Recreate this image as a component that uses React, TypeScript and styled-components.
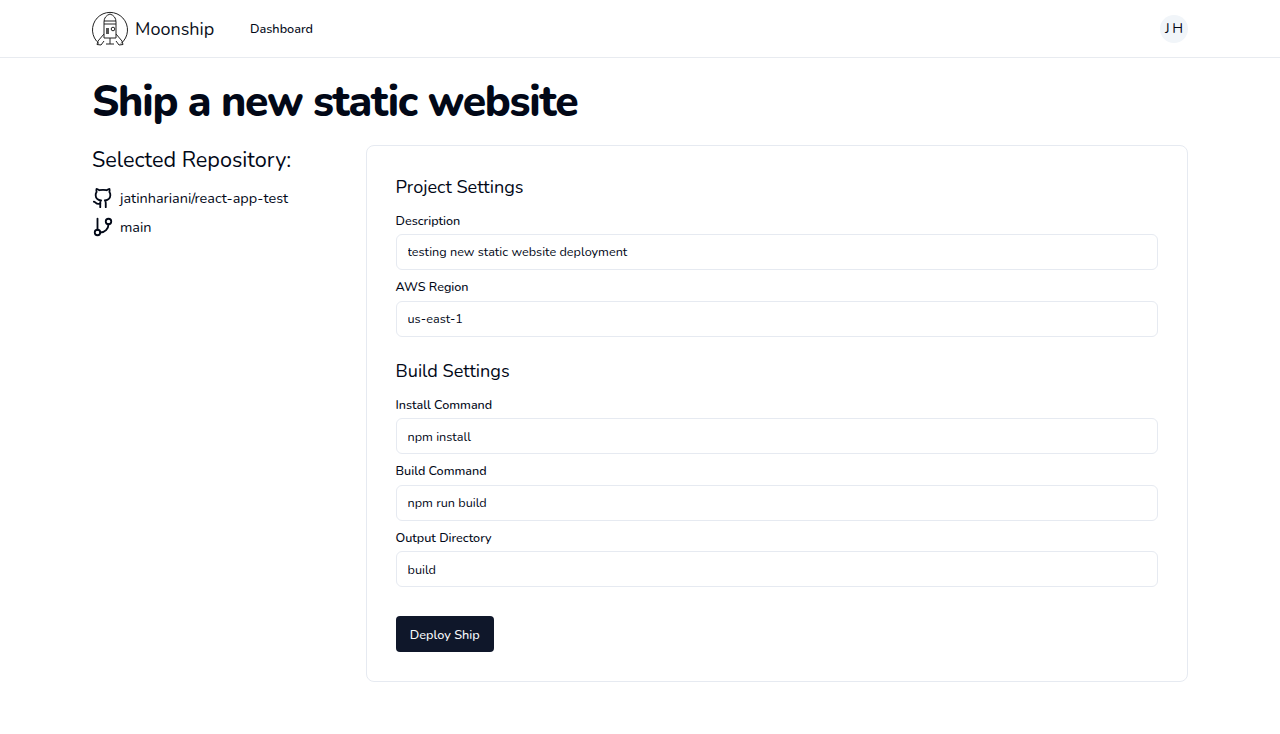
import React from "react";
import styled, { createGlobalStyle } from "styled-components";
import { Github, GitBranch } from "lucide-react";

const Global = createGlobalStyle`
  * { box-sizing: border-box; }
  html, body { margin: 0; padding: 0; background: #fff; }
  body { font-family: "Nunito", "Lato", "Noto Sans", sans-serif; color: #020817; }
`;
const Header = styled.header`
  height: 58px;
  border-bottom: 1px solid #e8ebf0;
  padding: 0 92px;
  display: flex;
  align-items: center;
  justify-content: space-between;
`;
const Left = styled.div`display: flex; align-items: center;`;
const Brand = styled.div`
  display: flex; align-items: center; gap: 7px;
  font-size: 18px; width: 158px; color: #0b1020;
`;
const NavLink = styled.a`font-size: 12.7px; font-weight: 500; color: #020817;`;
const Avatar = styled.div`
  width: 28px; height: 28px; border-radius: 50%;
  background: #f1f5f9; display: flex; align-items: center; justify-content: center;
  font-size: 14.2px; word-spacing: -1px;
`;
const Main = styled.main`padding: 0 92px;`;
const Title = styled.h1`
  margin: 0; padding-top: 20px; height: 87px;
  font-size: 42.67px; line-height: 48px; font-weight: 800; letter-spacing: -1.25px; color: #020817;
`;
const Columns = styled.div`display: flex; align-items: flex-start;`;
const Side = styled.aside`width: 274px; flex: none;`;
const SideTitle = styled.h2`
  margin: 0 0 8.5px; font-size: 21.6px; line-height: 30px; font-weight: 400;
`;
const RepoRow = styled.div`
  display: flex; align-items: center; gap: 6px; height: 29px;
  font-size: 14.45px;
`;
const Card = styled.section`
  flex: 1; height: 537px; border: 1px solid #e6eaf1; border-radius: 8px;
  padding: 28.5px 29.5px 28.5px 28.5px;
`;
const SectionTitle = styled.h3<{ $top?: number; $bottom: number }>`
  margin: ${p => p.$top ?? 0}px 0 ${p => p.$bottom}px; font-size: 18.1px; line-height: 24px; font-weight: 400;
`;
const Field = styled.label`display: block; margin-bottom: 8.1px;`;
const Label = styled.span`
  display: block; font-size: 12.6px; line-height: 17.8px; font-weight: 500; margin-bottom: 4.7px;
`;
const Input = styled.input`
  display: block; width: 100%; height: 36px; border: 1px solid #e6eaf1; border-radius: 6px;
  padding: 0 11px; font: inherit; font-size: 12.67px; color: #020817; background: #fff; outline: none;
`;
const Button = styled.button`
  display: block; margin-top: 29px; width: 98.5px; height: 36px; border: 0; border-radius: 4px;
  background: #0f172a; color: #f8fafc; font: inherit; font-size: 12.7px; font-weight: 500;
`;
const Logo = () => (
  <svg width="36" height="36" viewBox="0 0 36 36" fill="none" stroke="#222" strokeWidth="1">
    <path d="M7 32.5A17.5 17.5 0 1 1 29 32.5" />
    <path d="M12 27V11q0-6 6-8q6 2 6 8v16z" />
    <path d="M12 10h12M12 13h12" />
    <rect x="14" y="17" width="3" height="6" fill="#555" stroke="none" />
    <circle cx="21" cy="18" r="1.8" />
    <path d="M18 27v6M14 33h8" />
    <path d="M12 23l-6 7-1 3.5 4 .5 3-4M24 23l6 7 1 3.5-4 .5-3-4" />
  </svg>
);
const fields1 = [["Description", "testing new static website deployment"], ["AWS Region", "us-east-1"]];
const fields2 = [["Install Command", "npm install"], ["Build Command", "npm run build"], ["Output Directory", "build"]];
const F = ({ l, v }: { l: string; v: string }) => (
  <Field><Label>{l}</Label><Input readOnly value={v} /></Field>
);
export default function App() {
  return (
    <>
      <Global />
      <Header>
        <Left>
          <Brand><Logo />Moonship</Brand>
          <NavLink>Dashboard</NavLink>
        </Left>
        <Avatar>J H</Avatar>
      </Header>
      <Main>
        <Title>Ship a new static website</Title>
        <Columns>
          <Side>
            <SideTitle>Selected Repository:</SideTitle>
            <RepoRow><Github size={22} />jatinhariani/react-app-test</RepoRow>
            <RepoRow><GitBranch size={22} />main</RepoRow>
          </Side>
          <Card>
            <SectionTitle $bottom={13}>Project Settings</SectionTitle>
            {fields1.map(([l, v]) => <F key={l} l={l} v={v} />)}
            <SectionTitle $top={22} $bottom={13}>Build Settings</SectionTitle>
            {fields2.map(([l, v]) => <F key={l} l={l} v={v} />)}
            <Button>Deploy Ship</Button>
          </Card>
        </Columns>
      </Main>
    </>
  );
}
